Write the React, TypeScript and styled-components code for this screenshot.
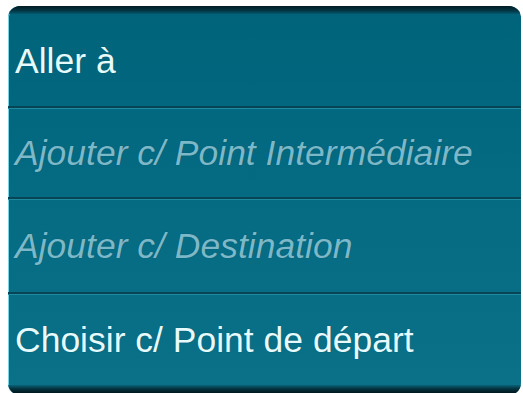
import React from "react";
import styled, { createGlobalStyle } from "styled-components";

const Global = createGlobalStyle`
  html, body { margin: 0; padding: 0; background: #ffffff; overflow: hidden; }
  body { font-family: "Liberation Sans", Arial, sans-serif; }
`;

const Page = styled.div`
  width: 523px;
  height: 393px;
  padding: 6px 2px 0 8px;
  box-sizing: border-box;
  overflow: hidden;
`;

const Panel = styled.div`
  display: flex;
  flex-direction: column;
  width: 513px;
  border-radius: 12px;
  overflow: hidden;
  background: linear-gradient(180deg, #006379 0%, #036a82 40%, #0a7189 100%);
  box-shadow: inset 1px 0 0 #7fd3e2;
`;

const EdgeTop = styled.div`
  height: 8px;
  background: linear-gradient(180deg, #011a22 0%, #023644 60%, #035a70 100%);
`;

const EdgeBottom = styled.div`
  height: 10px;
  background: linear-gradient(180deg, #0b6379 0%, #03303b 40%, #010d12 100%);
`;

const Row = styled.div<{ $h: number; $first?: boolean }>`
  height: ${(p) => p.$h}px;
  display: flex;
  align-items: center;
  padding: 3px 0 0 7px;
  box-sizing: border-box;
  border-top: ${(p) => (p.$first ? "none" : "2px solid #064456")};
  box-shadow: ${(p) => (p.$first ? "none" : "inset 0 1px 0 #1d8aa0")};
`;

const Label = styled.span<{ $disabled?: boolean }>`
  font-family: "Liberation Sans", Arial, sans-serif;
  font-size: 35.5px;
  line-height: 1;
  white-space: nowrap;
  color: ${(p) => (p.$disabled ? "#7cb8c8" : "#e6fbff")};
  font-style: ${(p) => (p.$disabled ? "italic" : "normal")};
  text-shadow: 0 0 1px rgba(0, 40, 50, 0.4);
`;

const items = [
  { label: "Aller à", disabled: false, h: 92 },
  { label: "Ajouter c/ Point Intermédiaire", disabled: true, h: 91 },
  { label: "Ajouter c/ Destination", disabled: true, h: 95 },
  { label: "Choisir c/ Point de départ", disabled: false, h: 93 },
];

export default function App() {
  return (
    <>
      <Global />
      <Page>
        <Panel>
          <EdgeTop />
          {items.map((it, i) => (
            <Row key={it.label} $h={it.h} $first={i === 0}>
              <Label $disabled={it.disabled}>{it.label}</Label>
            </Row>
          ))}
          <EdgeBottom />
        </Panel>
      </Page>
    </>
  );
}
